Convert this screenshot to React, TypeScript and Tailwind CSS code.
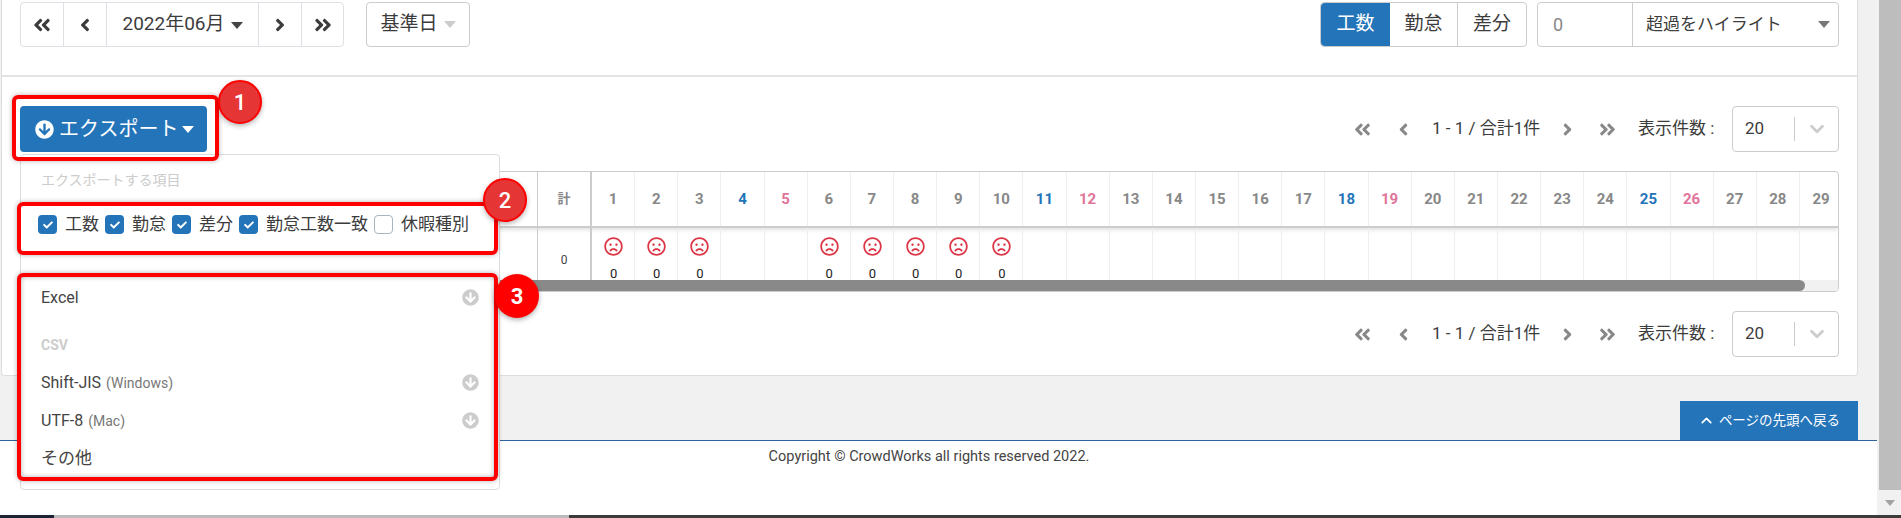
import { FaRegFrown, FaArrowCircleDown, FaCheck, FaAngleDoubleLeft, FaAngleDoubleRight, FaAngleLeft, FaAngleRight } from "react-icons/fa"
import { FiChevronDown, FiChevronUp } from "react-icons/fi"

// day number -> text colour: saturdays blue, sundays pink
const SATURDAYS = [4, 11, 18, 25]
const SUNDAYS = [5, 12, 19, 26]
const DAYS = Array.from({ length: 29 }, (_, i) => i + 1)
const MISSING = [1, 2, 3, 6, 7, 8, 9, 10]

function dayColor(d: number) {
  if (SATURDAYS.includes(d)) return "text-[#2474b9]"
  if (SUNDAYS.includes(d)) return "text-[#e0749a]"
  return "text-[#888888]"
}

function Pager() {
  return (
    <div className="flex h-[46px] items-center justify-end text-[17px] text-[#3c3c3c]">
      <FaAngleDoubleLeft className="text-[#888888]" size={19} />
      <FaAngleLeft className="ml-[21.5px] text-[#888888]" size={19} />
      <span className="ml-[19.5px] w-[106px] whitespace-nowrap">1 - 1 / 合計1件</span>
      <FaAngleRight className="ml-[19.5px] text-[#888888]" size={19} />
      <FaAngleDoubleRight className="ml-[21px] text-[#888888]" size={19} />
      <span className="ml-[21.5px] w-[79px] whitespace-nowrap">表示件数 :</span>
      <div className="ml-[15px] flex h-[46px] w-[107px] items-center rounded border border-[#cccccc] pl-3">
        <span className="w-[49px]">20</span>
        <span className="h-6 w-px bg-[#cccccc]" />
        <FiChevronDown className="ml-[11px] text-[#cccccc]" size={22} strokeWidth={3} />
      </div>
    </div>
  )
}

function NavCell({ children, className }: { children: React.ReactNode; className: string }) {
  return <div className={`flex h-full items-center justify-center border-r border-[#dde0e4] ${className}`}>{children}</div>
}

function Check({ label, checked = true }: { label: string; checked?: boolean }) {
  return (
    <label className="flex items-center gap-2 text-[17px] text-[#3c3c3c]">
      {checked ? (
        <span className="flex h-[19px] w-[19px] items-center justify-center rounded-sm bg-[#2474b9] text-white">
          <FaCheck size={10} />
        </span>
      ) : (
        <span className="h-[19px] w-[19px] rounded-sm border border-[#a9b4c0] bg-white" />
      )}
      <span className="whitespace-nowrap">{label}</span>
    </label>
  )
}

function ExportRow({ label, note }: { label: string; note?: string }) {
  return (
    <div className="flex h-[38px] items-center justify-between pl-[20px] pr-[20px] text-[16px] text-[#444444]">
      <span>
        {label}
        {note && <span className="ml-[5px] text-[14px] text-[#777777]">{note}</span>}
      </span>
      <FaArrowCircleDown className="text-[#cccccc]" size={17} />
    </div>
  )
}

function ExportMenu() {
  return (
    <div className="absolute left-0 top-[48px] z-10 h-[336px] w-[480px] rounded border border-[#dddddd] bg-white">
      <p className="pl-[20px] pt-[15px] text-[14px] leading-5 text-[#cccccc]">エクスポートする項目</p>
      <div className="mt-[22px] flex gap-[6px] pl-[17px]">
        <Check label="工数" />
        <Check label="勤怠" />
        <Check label="差分" />
        <Check label="勤怠工数一致" />
        <Check label="休暇種別" checked={false} />
      </div>
      <div className="mt-[41px]">
        <ExportRow label="Excel" />
      </div>
      <p className="mt-[18px] pl-[20px] text-[14px] font-bold leading-5 text-[#cccccc]">CSV</p>
      <div className="mt-[9px]">
        <ExportRow label="Shift-JIS" note="(Windows)" />
        <ExportRow label="UTF-8" note="(Mac)" />
        <div className="flex h-[38px] items-center pl-[20px] text-[17px] text-[#444444]">その他</div>
      </div>
    </div>
  )
}

function DayTable() {
  return (
    <div className="relative mt-[19px] h-[121px] overflow-hidden rounded border border-[#cccccc]">
      <div className="flex h-[56px] border-b-2 border-[#cccccc] shadow-[0_2px_4px_rgba(0,0,0,0.12)]">
        <div className="w-[517px] shrink-0 border-r border-[#cccccc]" />
        <div className="flex w-[54px] shrink-0 items-center justify-center border-r-2 border-[#cccccc] text-[13px] font-bold text-[#888888]">
          計
        </div>
        {DAYS.map((d) => (
          <div
            key={d}
            className={`flex w-[43.15px] shrink-0 items-center justify-center border-r border-[#eeeeee] text-[15px] font-bold ${dayColor(d)}`}
          >
            {d}
          </div>
        ))}
      </div>
      <div className="flex h-[63px]">
        <div className="w-[517px] shrink-0 border-r border-[#cccccc]" />
        <div className="flex w-[54px] shrink-0 items-center justify-center border-r-2 border-[#cccccc] text-[12px] text-[#444444]">
          0
        </div>
        {DAYS.map((d) => (
          <div key={d} className="flex w-[43.15px] shrink-0 flex-col items-center border-r border-[#eeeeee] pl-[1px] pt-[9px]">
            {MISSING.includes(d) && (
              <>
                <FaRegFrown className="text-[#dc3545]" size={19} />
                <span className="mt-[11px] text-[13px] leading-[13px] text-[#222222]">0</span>
              </>
            )}
          </div>
        ))}
      </div>
      {/* horizontal scrollbar lies over the last row */}
      <div className="absolute inset-x-0 bottom-0 h-[11px] bg-[#f1f1f1]">
        <div className="h-full w-[1784px] rounded-r-full bg-[#000000]/[0.43]" />
      </div>
    </div>
  )
}

export default function App() {
  return (
    <div className="relative h-[518px] w-[1901px] overflow-hidden bg-white font-['Roboto','Noto_Sans_CJK_JP',sans-serif]">
      <div className="flex h-[515px]">
        <div className="flex w-[1877px] flex-col">
          <div className="h-[440px] bg-[#f1f1f1] pl-[1px] pr-[19px]">
            <div className="h-[376px] rounded-b border-x border-b border-[#dddddd] bg-white">
              {/* toolbar */}
              <div className="flex h-[77px] items-start justify-between border-b-2 border-[#e4e4e4] px-[18px] pt-[2px] text-[19px] text-[#3c3c3c]">
                <div className="flex h-[45px] gap-[22px]">
                  <div className="flex h-full w-[324px] rounded border border-[#dde0e4]">
                    <NavCell className="w-[43px]"><FaAngleDoubleLeft size={20} /></NavCell>
                    <NavCell className="w-[43px]"><FaAngleLeft size={20} /></NavCell>
                    <NavCell className="w-[152px] gap-[6px]">2022年06月<span className="mt-[1px] h-0 w-0 border-x-[6px] border-t-[7px] border-x-transparent border-t-[#444444]" /></NavCell>
                    <NavCell className="w-[43px]"><FaAngleRight size={20} /></NavCell>
                    <div className="flex flex-1 items-center justify-center"><FaAngleDoubleRight size={20} /></div>
                  </div>
                  <div className="flex w-[104px] items-center justify-center gap-[6px] rounded border border-[#cccccc]">
                    基準日<span className="h-0 w-0 border-x-[6px] border-t-[7px] border-x-transparent border-t-[#cccccc]" />
                  </div>
                </div>
                <div className="flex h-[45px] gap-[10px]">
                  <div className="flex w-[207px] rounded border border-[#cccccc]">
                    <div className="flex w-[69px] items-center justify-center rounded-l bg-[#2474b9] text-white">工数</div>
                    <div className="flex w-[68px] items-center justify-center border-r border-[#cccccc]">勤怠</div>
                    <div className="flex flex-1 items-center justify-center">差分</div>
                  </div>
                  <div className="flex w-[302px] items-center rounded border border-[#cccccc] text-[17px]">
                    <div className="flex h-full w-[95px] items-center border-r border-[#cccccc] pl-[15px] text-[18px] text-[#888888]">0</div>
                    <span className="ml-[13px] w-[172px] whitespace-nowrap">超過をハイライト</span>
                    <span className="h-0 w-0 border-x-[6px] border-t-[7px] border-x-transparent border-t-[#777777]" />
                  </div>
                </div>
              </div>

              <div className="px-[18px] pt-[29px]">
                <div className="relative flex items-start justify-between">
                  <div className="flex h-[46px] w-[187px] items-center rounded bg-[#2474b9] pl-[15px] text-[20px] text-white">
                    <FaArrowCircleDown size={19} />
                    <span className="ml-[5px] whitespace-nowrap">エクスポート</span>
                    <span className="ml-[4px] h-0 w-0 border-x-[6px] border-t-[7px] border-x-transparent border-t-white" />
                  </div>
                  <Pager />
                  <ExportMenu />
                </div>
                <DayTable />
                <div className="mt-[19px]">
                  <Pager />
                </div>
              </div>
            </div>
            <div className="mt-[25px] flex justify-end">
              <div className="flex h-[39px] w-[178px] items-center justify-center gap-1 bg-[#2474b9] text-[13.5px] text-white">
                <FiChevronUp size={17} strokeWidth={2.5} />
                ページの先頭へ戻る
              </div>
            </div>
          </div>
          <div className="flex-1 border-t border-[#2e6299] pr-[19px] pt-[5px] text-center text-[14.5px] text-[#444444]">
            Copyright © CrowdWorks all rights reserved 2022.
          </div>
        </div>
        {/* page scrollbar */}
        <div className="flex w-[24px] flex-col bg-[#f1f1f1] pl-[2px]">
          <div className="h-[490px] bg-[#bdbdbd]" />
          <div className="flex flex-1 items-center justify-center">
            <span className="h-0 w-0 border-x-[5px] border-t-[6px] border-x-transparent border-t-[#a3a3a3]" />
          </div>
        </div>
      </div>
      {/* desktop strip cut off at the bottom */}
      <div className="flex h-[3px]">
        <div className="w-[54px] bg-[#1c2433]" />
        <div className="w-[515px] bg-[#bbbbbb]" />
        <div className="flex-1 bg-[#3d3a3a]" />
      </div>

      {/* red annotations drawn over the screenshot */}
      <div className="absolute left-[12px] top-[95px] z-20 h-[66px] w-[207px] rounded-md border-[4px] border-[#ff0000] shadow-[0_0_5px_rgba(0,0,0,0.3)]" />
      <div className="absolute left-[17px] top-[202px] z-20 h-[53px] w-[481px] rounded-md border-[4px] border-[#ff0000] shadow-[0_0_5px_rgba(0,0,0,0.3)]" />
      <div className="absolute left-[17px] top-[273px] z-20 h-[208px] w-[481px] rounded-md border-[4px] border-[#ff0000] shadow-[0_0_5px_rgba(0,0,0,0.3),inset_0_0_5px_rgba(0,0,0,0.3)]" />
      <div className="absolute left-[218px] top-[80px] z-30 flex h-[44px] w-[44px] items-center justify-center rounded-full border-2 border-[#ff0000] bg-[#e53535] text-[22px] font-medium text-white shadow-[0_2px_5px_rgba(0,0,0,0.3)]">1</div>
      <div className="absolute left-[483px] top-[178px] z-30 flex h-[44px] w-[44px] items-center justify-center rounded-full border-2 border-[#ff0000] bg-[#e53535] text-[22px] font-medium text-white shadow-[0_2px_5px_rgba(0,0,0,0.3)]">2</div>
      <div className="absolute left-[495px] top-[274px] z-30 flex h-[44px] w-[44px] items-center justify-center rounded-full bg-[#ff0000] text-[22px] font-bold text-white shadow-[0_2px_5px_rgba(0,0,0,0.3)]">3</div>
    </div>
  )
}
